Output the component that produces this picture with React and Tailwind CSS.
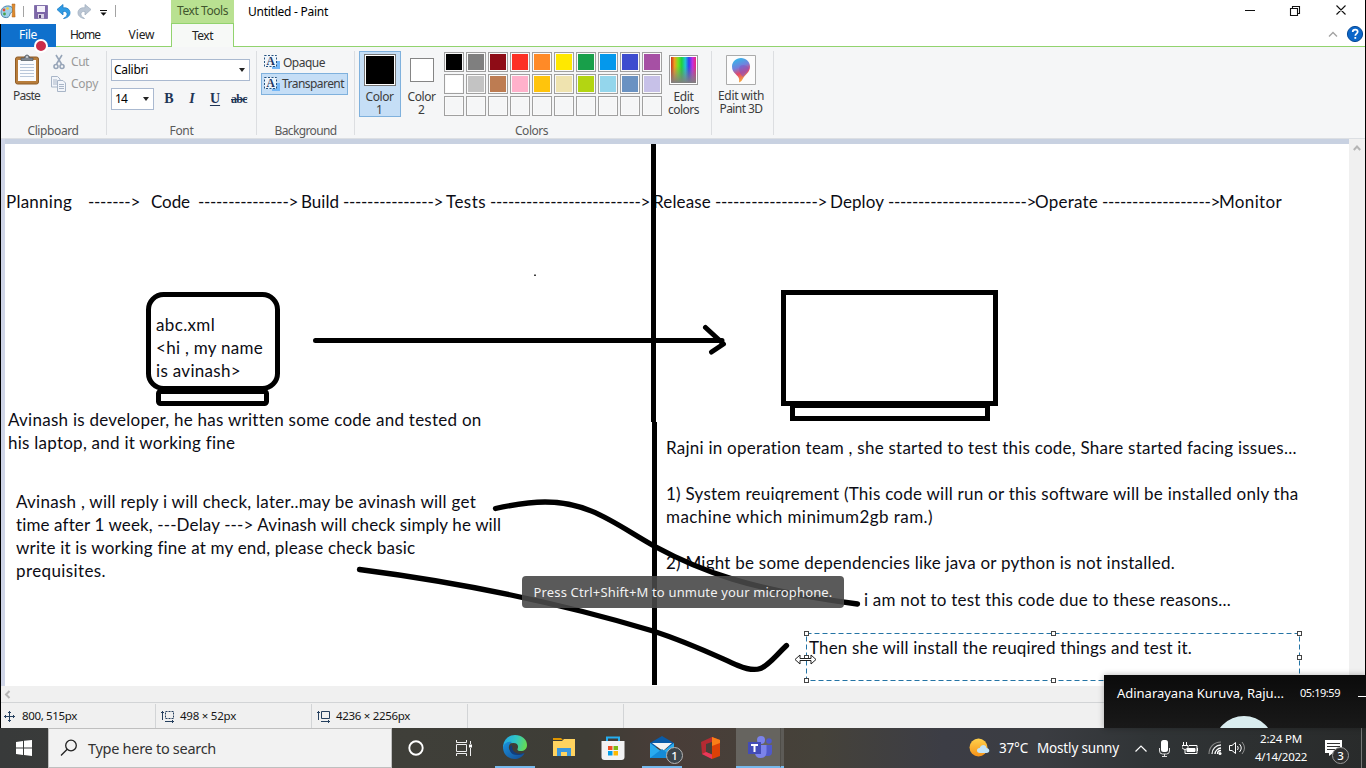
import React, { useLayoutEffect, useRef } from "react";

/* A single line of text, tracked so that it fills exactly `w` pixels. */
function Fit({ w, children, className = "" }) {
  const ref = useRef(null);
  useLayoutEffect(() => {
    const el = ref.current;
    el.style.letterSpacing = "0px";
    el.style.width = "auto";
    const natural = el.getBoundingClientRect().width;
    el.style.letterSpacing = (w - natural) / el.textContent.length + "px";
    el.style.width = w + "px";
  }, [w, children]);
  return (
    <span ref={ref} className={"inline-block shrink-0 whitespace-pre " + className}>
      {children}
    </span>
  );
}

const NOTES = [
  [6, 202, 66, "Planning"],
  [88, 202, 52, "------->"],
  [151, 202, 39, "Code"],
  [198, 202, 100, "--------------->"],
  [301, 202, 38, "Build"],
  [343, 202, 100, "--------------->"],
  [446, 202, 40, "Tests"],
  [490, 202, 160, "------------------------->"],
  [653, 202, 58, "Release"],
  [715, 202, 112, "----------------->"],
  [830, 202, 54, "Deploy"],
  [888, 202, 148, "----------------------->"],
  [1035, 202, 63, "Operate"],
  [1102, 202, 118, "------------------>"],
  [1219, 202, 63, "Monitor"],
  [156, 325, 59, "abc.xml"],
  [156, 348, 107, "<hi , my name"],
  [156, 371, 85, "is avinash>"],
  [8, 420, 473, "Avinash is developer, he has written some code and tested on"],
  [8, 443, 227, "his laptop, and it working fine"],
  [16, 502, 460, "Avinash , will reply i will check, later..may be avinash will get"],
  [16, 525, 485, "time after 1 week, ---Delay ---> Avinash will check simply he will"],
  [16, 548, 399, "write it is working fine at my end, please check basic"],
  [16, 571, 90, "prequisites."],
  [666, 448, 631, "Rajni in operation team , she started to test this code, Share started facing issues..."],
  [666, 494, 632, "1) System reuiqrement (This code will run or this software will be installed only tha"],
  [666, 517, 267, "machine which minimum2gb ram.)"],
  [666, 563, 509, "2) Might be some dependencies like java or python is not installed."],
  [864, 600, 367, "i am not to test this code due to these reasons..."],
  [809, 648, 383, "Then she will install the reuqired things and test it."],
];

const PALETTE = [
  "bg-black", "bg-[#7f7f7f]", "bg-[#8e0c16]", "bg-[#fc3025]", "bg-[#ff8a27]",
  "bg-[#ffe800]", "bg-[#189f4a]", "bg-[#0498ec]", "bg-[#3d4ccf]", "bg-[#a650a4]",
  "bg-white", "bg-[#c3c3c3]", "bg-[#bd7c52]", "bg-[#ffb1cb]", "bg-[#ffc40c]",
  "bg-[#efe3af]", "bg-[#b3d512]", "bg-[#94d6ec]", "bg-[#6a92c2]", "bg-[#c7c1e8]",
  "bg-[#f5f6f7]", "bg-[#f5f6f7]", "bg-[#f5f6f7]", "bg-[#f5f6f7]", "bg-[#f5f6f7]",
  "bg-[#f5f6f7]", "bg-[#f5f6f7]", "bg-[#f5f6f7]", "bg-[#f5f6f7]", "bg-[#f5f6f7]",
];

function TitleBar() {
  return (
    <div className="flex h-[47px] shrink-0 border-b border-[#92d36e] bg-white text-[12px] text-[#222]">
      <div className="flex w-[171px] shrink-0 flex-col">
        <div className="flex h-[24px] items-center">
          <svg width="170" height="24" viewBox="0 0 170 24">
            <path d="M1 12C1 8 5 5.500 9 6c3 .5 4 2 4 4 0 3-3 2-3 4 0 3-3 4-5 3.500C2 17 1 15 1 12z" fill="#9fd0ea" stroke="#4d87ad" />
            <circle cx="4" cy="10" r="1.400" fill="#e04b32" />
            <circle cx="7.500" cy="8.500" r="1.300" fill="#f4d03c" />
            <circle cx="4.500" cy="14" r="1.400" fill="#46a049" />
            <path d="M12 4h3l-.3 5 .4 8h-3l.4-8z" fill="#df8a2c" stroke="#a85f18" strokeWidth=".5" />
            <path d="M23.500 6v11M115.500 5v12" stroke="#a3a3a3" />
            <path d="M34.500 5.500h13v13h-13z" fill="#7d66a8" stroke="#8574ad" />
            <path d="M37 6h8v6h-8z" fill="#f4f1fa" />
            <path d="M38 14h6v4.500h-6z" fill="#d7d1e3" />
            <path d="M39 15h2v3h-2z" fill="#544577" />
            <path d="M57 9.500l6-5v3.300c4-.5 7 1.500 7 5 0 3-2.500 5.200-6.500 5.700 2.700-1.500 4-3 3.500-5-.4-1.700-2-2.300-4-2v3.500z" fill="#2f9be4" stroke="#1e7ec6" strokeWidth=".8" />
            <path d="M91 9.500l-6-5v3.300c-4-.5-7 1.500-7 5 0 3 2.500 5.200 6.500 5.700-2.700-1.500-4-3-3.500-5 .4-1.700 2-2.300 4-2v3.500z" fill="#bac5d3" stroke="#a3b1c2" strokeWidth=".8" />
            <path d="M100 10.500h7" stroke="#111" />
            <path d="M100.500 12.500h6l-3 3.300z" fill="#111" />
          </svg>
        </div>
        <div className="flex h-[22px] items-center">
          <div className="relative flex h-[23px] w-[56px] items-center justify-center bg-[#0f70cc] text-white">
            <Fit w={18}>File</Fit>
            <span className="absolute left-[34px] top-[15px] z-10 h-[14px] w-[14px] rounded-full border-2 border-white bg-[#ca2c49]" />
          </div>
          <div className="flex w-[58px] justify-center"><Fit w={30}>Home</Fit></div>
          <div className="flex w-[55px] justify-center"><Fit w={26}>View</Fit></div>
        </div>
      </div>
      <div className="flex h-[47px] w-[63px] shrink-0 flex-col">
        <div className="flex h-[23px] items-center justify-center bg-[#b9e191] pb-[2px] text-[#41562e]"><Fit w={51}>Text Tools</Fit></div>
        <div className="flex h-[24px] items-center justify-center border-x border-t border-[#92d36e] bg-[#f7f9f7]"><Fit w={21}>Text</Fit></div>
      </div>
      <div className="flex h-[24px] w-[981px] items-center pl-[14px] text-black"><Fit w={80}>Untitled - Paint</Fit></div>
      <svg className="shrink-0" width="150" height="46" viewBox="0 0 150 46">
        <path d="M30 10.500h10M75.500 8.500h7v7h-7zM77.500 8V6.500h7v7H83M121.500 5.500l9 9M130.500 5.500l-9 9" stroke="#111" fill="none" strokeWidth="1.100" />
        <path d="M114 36.500l4-4 4 4" stroke="#a2a2a2" fill="none" strokeWidth="1.300" />
        <circle cx="140" cy="34" r="7.600" fill="#0b66c8" stroke="#074a98" />
        <path d="M137.700 32c0-3.200 5-3 5-.2 0 1.900-2.400 1.800-2.400 4" stroke="#fff" strokeWidth="1.700" fill="none" />
        <path d="M139.400 37h1.800v1.800h-1.800z" fill="#fff" />
      </svg>
    </div>
  );
}

function RibbonGroup({ label, labelWidth, className, children }) {
  return (
    <div className={"flex h-[84px] shrink-0 flex-col border-r border-[#dcdee1] " + className}>
      <div className="flex h-[69px] shrink-0">{children}</div>
      <div className="flex justify-center pt-[2px] leading-[15px] text-[#5a5a5a]">
        {label && <Fit w={labelWidth} className="pt-px">{label}</Fit>}
      </div>
    </div>
  );
}

function LetterBox() {
  return (
    <svg className="shrink-0" width="17" height="16" viewBox="0 0 17 16">
      <path d="M8 7h8v8H8z" fill="#74b7f7" />
      <path d="M.5 1.500h12v11H.5z" fill="#eef5fc" stroke="#27537f" strokeDasharray="2 1.500" />
      <text x="2.500" y="11" fontFamily="Liberation Serif, serif" fontWeight="700" fontSize="11.500" fill="#1f3864">A</text>
    </svg>
  );
}

function Ribbon() {
  return (
    <div className="flex h-[92px] shrink-0 border-b border-[#dcdfe3] bg-[#f5f6f7] pt-1 text-[12px] text-[#3c3c3c]">
      <RibbonGroup label="Clipboard" labelWidth={51} className="w-[107px]">
        <div className="flex w-[52px] flex-col items-center pl-px pt-[3px]">
          <svg width="26" height="31" viewBox="0 0 26 31">
            <rect x="1.500" y="3" width="23" height="27" rx="2" fill="#b77d3b" stroke="#8f5d27" />
            <path d="M4 6h18v21H4z" fill="#fbfcfe" />
            <path d="M6 10.500h14M6 13.500h14M6 16.500h14M6 19.500h14M6 22.500h14" stroke="#b9c7da" />
            <path d="M7 6.500V4h3.500c0-4 5-4 5 0H19v2.500z" fill="#7e8791" stroke="#4e565f" strokeWidth=".7" />
            <path d="M12 3h2" stroke="#fff" />
          </svg>
          <Fit w={27} className="mt-[3px] leading-[16px]">Paste</Fit>
        </div>
        <div className="flex flex-col pt-[3px] text-[#9a9a9a]">
          <div className="flex h-[16px] items-center">
            <svg width="19" height="16" viewBox="0 0 19 16" fill="none" stroke="#97a5b8" strokeWidth="1.600">
              <path d="M4 1l5.500 9M10 1L4.500 10" />
              <circle cx="4" cy="12.500" r="2" /><circle cx="10" cy="12.500" r="2" />
            </svg>
            <Fit w={18}>Cut</Fit>
          </div>
          <div className="mt-[6px] flex h-[16px] items-center">
            <svg className="-ml-[1px]" width="20" height="16" viewBox="0 0 20 16" fill="#f2f5fa" stroke="#a8b5c7">
              <path d="M.5.500h6l2.500 2.500v8H.5z" /><path d="M2 4h4M2 6h4M2 8h4" />
              <path d="M6.500 4.500h5.500l2.500 2.500v8.500h-8z" /><path d="M8 8.500h5M8 10.500h5M8 12.500h5" />
            </svg>
            <Fit w={27}>Copy</Fit>
          </div>
        </div>
      </RibbonGroup>

      <RibbonGroup label="Font" labelWidth={24} className="w-[150px]">
        <div className="flex flex-col pl-1 pt-2">
          <div className="flex h-[22px] w-[139px] items-center justify-between border border-[#aab9d0] bg-white pl-[2px] pr-[4px] text-black">
            <Fit w={34}>Calibri</Fit>
            <svg width="6" height="4"><path d="M0 0h6L3 4z" fill="#222" /></svg>
          </div>
          <div className="mt-[7px] flex items-center">
            <div className="flex h-[22px] w-[43px] items-center justify-between border border-[#aab9d0] bg-white pl-[3px] pr-[4px] text-black">
              <Fit w={12}>14</Fit>
              <svg width="6" height="4"><path d="M0 0h6L3 4z" fill="#222" /></svg>
            </div>
            <div className="flex items-center font-['Liberation_Serif',serif] text-[14px] font-bold leading-[20px] text-[#1f3556]">
              <span className="w-[30px] text-center">B</span>
              <span className="w-[16px] text-center italic">I</span>
              <span className="w-[30px] text-center underline underline-offset-2">U</span>
              <span className="w-[18px] text-center text-[12px]"><Fit w={16} className="line-through">abc</Fit></span>
            </div>
          </div>
        </div>
      </RibbonGroup>

      <RibbonGroup label="Background" labelWidth={62} className="w-[98px]">
        <div className="flex flex-col pl-1">
          <div className="flex h-[22px] items-center gap-[2px] pl-[3px]"><LetterBox /><Fit w={42} className="pt-px">Opaque</Fit></div>
          <div className="flex h-[22px] w-[87px] items-center gap-[1px] border border-[#7fb1dd] bg-[#c5def6] pl-[2px]"><LetterBox /><Fit w={62}>Transparent</Fit></div>
        </div>
      </RibbonGroup>

      <RibbonGroup label="Colors" labelWidth={33} className="w-[357px] pr-[3px]">
        <div className="ml-1 flex h-[66px] w-[42px] shrink-0 flex-col items-center border border-[#7fb1dd] bg-[#c5def6] pr-px pt-[2px] leading-[13px]">
          <div className="h-[32px] w-[32px] border border-[#777] bg-white p-px"><div className="h-full bg-black" /></div>
          <Fit w={28} className="mt-1">Color</Fit><span>1</span>
        </div>
        <div className="mr-[2px] flex w-[41px] shrink-0 flex-col items-center pt-[7px] leading-[13px]">
          <div className="ml-px h-[24px] w-[24px] border border-[#858585] bg-white" />
          <Fit w={28} className="mt-2">Color</Fit><span>2</span>
        </div>
        <div className="mt-px grid h-[64px] shrink-0 grid-cols-10 gap-[2px]">
          {PALETTE.map((c, i) => (
            <div key={i} className="h-[20px] w-[20px] border border-[#a0a0a0] bg-[#fafafa] p-px"><div className={"h-full " + c} /></div>
          ))}
        </div>
        <div className="flex w-[43px] shrink-0 flex-col items-center pt-[4px] leading-[13px]">
          <div className="h-[30px] w-[29px] border border-[#9a9a9a] bg-white p-px">
            <div className="h-full bg-[linear-gradient(to_right,#c83020,#f0a020,#78e020,#20d040,#20c8d0,#3040f0,#c030e0,#e82878)]">
              <div className="h-full bg-[linear-gradient(to_bottom,transparent_35%,#808080)]" />
            </div>
          </div>
          <Fit w={20} className="mt-[5px]">Edit</Fit><Fit w={31}>colors</Fit>
        </div>
      </RibbonGroup>

      <RibbonGroup className="w-[62px]">
        <div className="flex w-[58px] flex-col items-center pt-[4px] leading-[13px]">
          <svg width="30" height="30" viewBox="0 0 30 30">
            <defs>
              <linearGradient id="pin" x1="0" y1="0" x2=".3" y2="1">
                <stop offset="0" stopColor="#25c5ee" /><stop offset=".45" stopColor="#7480dc" /><stop offset=".7" stopColor="#e3476b" /><stop offset="1" stopColor="#f6a43a" />
              </linearGradient>
            </defs>
            <path d="M.5.500h29v29H.5z" fill="#fcfcfc" stroke="#ababab" />
            <path d="M15 3c5 0 9 4 9 8.500 0 6-5 8-7 12-1 2-2 3-4 4 .8-4-.5-5.500-3-8-2.500-2.500-4-4.500-4-8C6 7 10 3 15 3z" fill="url(#pin)" />
            <path d="M14 11c3-2 6-1 9 2-1 4-4 6-6 9-3-3-5-7-3-11z" fill="#7b58c9" opacity=".55" />
          </svg>
          <Fit w={46} className="mt-[4px]">Edit with</Fit><Fit w={43}>Paint 3D</Fit>
        </div>
      </RibbonGroup>
    </div>
  );
}

function Handle({ className }) {
  return <span className={"absolute h-[5px] w-[5px] border border-[#444] bg-white " + className} />;
}

function Canvas() {
  return (
    <div className="relative flex h-[547px] shrink-0 overflow-hidden">
      <div className="h-full w-[5px] shrink-0 bg-[#cfd5e7]" />
      <div className="h-full w-[1344px] shrink-0 border-t-[5px] border-[#c8d1e1] bg-white" />
      <div className="flex h-full flex-1 justify-center bg-[#f0f0f0] pt-[6px]">
        <svg width="8" height="6"><path d="M.8 5L4 1.500 7.200 5" fill="none" stroke="#b5b5b5" strokeWidth="2" /></svg>
      </div>
      <div className="absolute left-0 top-0 font-[Lato,Carlito,sans-serif] text-[17px] leading-[24px] text-[#0c0c14]">
        {NOTES.map(([x, y, w, text], i) => (
          <div key={i} className="absolute" style={{ left: x, top: y - 139 - 12 }}>
            <Fit w={w}>{text}</Fit>
          </div>
        ))}
      </div>
      <svg className="absolute left-0 top-0" width="1366" height="547" viewBox="0 139 1366 547" fill="none" stroke="#000" strokeWidth="5">
        <path d="M653.500 144v278M654.500 422v263" />
        <rect x="148.500" y="294.500" width="129" height="94" rx="15" />
        <rect x="158.500" y="391.500" width="108" height="12" rx="2" />
        <path d="M315.500 340.500H722M705.500 327.500L723.500 344l-12 8" strokeLinecap="round" strokeLinejoin="round" />
        <rect x="783.500" y="292.500" width="212" height="111" />
        <rect x="792.500" y="405.500" width="195" height="13" />
        <path d="M495.500 508.500C512 505 528 502 545 502C590 502 615 524 654 546C700 571 750 590 857.500 604" strokeLinecap="round" strokeWidth="5.300" />
        <path d="M359.500 569.500C456 582 560 603 653 631C690 643 714 655 738 665.500C763 676 766 665 786.500 645.500" strokeLinecap="round" strokeWidth="5.300" />
        <path d="M535 274.500v1.500" strokeWidth="1.500" />
        <rect x="806.500" y="633.500" width="493" height="47" stroke="#2474a5" strokeWidth="1" strokeDasharray="5 3" />
      </svg>
      <Handle className="left-[804px] top-[492px]" />
      <Handle className="left-[1051px] top-[492px]" />
      <Handle className="left-[1297px] top-[492px]" />
      <Handle className="left-[804px] top-[516px]" />
      <Handle className="left-[1297px] top-[516px]" />
      <Handle className="left-[804px] top-[539px]" />
      <Handle className="left-[1051px] top-[539px]" />
      <svg className="absolute left-[794px] top-[515px]" width="24" height="11" viewBox="0 0 24 11">
        <path d="M1 5.500L6 1v3.500h11V1l5 4.500L17 10V6.500H6V10z" fill="#fff" stroke="#222" />
      </svg>
      <div className="absolute left-[522px] top-[437px] flex h-[32px] w-[322px] items-center justify-center rounded bg-[#484848]/90 pt-px text-[13px] text-[#f2f2f2]">
        <Fit w={299}>Press Ctrl+Shift+M to unmute your microphone.</Fit>
      </div>
    </div>
  );
}

function StatusBar() {
  return (
    <div className="flex h-[42px] shrink-0 flex-col bg-[#f0f0f0] text-[11.500px] text-[#151515]">
      <div className="flex h-[17px] items-center border-b border-[#d2d4d6] pl-[4px]">
        <svg width="7" height="9"><path d="M5.500 1L2 4.500 5.500 8" fill="none" stroke="#b5b5b5" strokeWidth="2" /></svg>
      </div>
      <div className="flex flex-1 pt-px">
        <div className="flex w-[156px] items-center border-r border-[#d2d4d6] pl-[4px]">
          <svg width="11" height="11" viewBox="0 0 11 11" fill="none" stroke="#26405f"><path d="M5.500 0v11M0 5.500h11M4 2l1.500-1.500L7 2M4 9l1.500 1.500L7 9M2 4L.5 5.500 2 7M9 4l1.500 1.500L9 7" /></svg>
          <Fit w={55} className="ml-[7px]">800, 515px</Fit>
        </div>
        <div className="flex w-[156px] items-center border-r border-[#d2d4d6] pl-[5px]">
          <svg width="14" height="13" viewBox="0 0 14 13" fill="none" stroke="#26405f"><path d="M1.500 1v9M0 3l1.500-1.500L3 3M4 11.500h9M11 10l1.500 1.500L11 13" /><path d="M4.500 1.500h8v7h-8z" strokeDasharray="2 1" /></svg>
          <Fit w={56} className="ml-[5px]">498 × 52px</Fit>
        </div>
        <div className="flex w-[156px] items-center border-r border-[#d2d4d6] pl-[5px]">
          <svg width="14" height="13" viewBox="0 0 14 13" fill="none" stroke="#26405f"><path d="M1.500 1v9M0 3l1.500-1.500L3 3M4 11.500h9M11 10l1.500 1.500L11 13M4.500 1.500h8v7h-8z" /></svg>
          <Fit w={74} className="ml-[5px]">4236 × 2256px</Fit>
        </div>
        <div className="w-[156px] border-r border-[#d2d4d6]" />
      </div>
    </div>
  );
}

function TaskIcon({ className = "", children }) {
  return <div className={"flex h-[40px] shrink-0 items-center justify-center " + className}>{children}</div>;
}

function Taskbar() {
  return (
    <div className="flex h-[40px] shrink-0 bg-[linear-gradient(to_right,#383a3a_0%,#3f3f39_30%,#3e3d36_43%,#493d38_49%,#45423a_60%,#3c3d45_69%,#3b3d42_76%,#303436_84%,#292b2b_100%)] text-white">
      <TaskIcon className="w-[48px]">
        <svg width="16" height="16" viewBox="0 0 16 16" fill="#fff"><path d="M0 2l7-1v6.500H0zM8 .8L16 0v7.500H8zM0 8.500h7V15l-7-1zM8 8.500h8V16l-8-.9z" /></svg>
      </TaskIcon>
      <div className="flex w-[344px] items-center border border-[#bfbfbf] bg-[#f2f2f2] pl-[11px] text-[14.500px] text-[#333]">
        <svg width="18" height="18" viewBox="0 0 18 18" fill="none" stroke="#222" strokeWidth="1.300"><circle cx="11" cy="6.500" r="5.300" /><path d="M7.200 10.300L1 16.500" /></svg>
        <Fit w={128} className="ml-[10px] pt-px">Type here to search</Fit>
      </div>
      <TaskIcon className="w-[48px]">
        <svg width="16" height="16"><circle cx="8" cy="8" r="6.700" fill="none" stroke="#fff" strokeWidth="1.900" /></svg>
      </TaskIcon>
      <TaskIcon className="w-[48px]">
        <svg width="16" height="16" viewBox="0 0 16 16" fill="none" stroke="#eee"><path d="M.5 0v2.500h10V0M.5 4.500h10v7H.5zM.5 16v-2.500h10V16M14.500 1v3M14.500 8v8" /><path d="M13 4.500h3v3h-3z" fill="#fff" stroke="none" /></svg>
      </TaskIcon>
      <TaskIcon className="ml-[7px] w-[40px] border-b-2 border-[#76b9ed]">
        <svg width="24" height="24" viewBox="0 0 24 24">
          <defs>
            <linearGradient id="edgeTop" x1="0" y1=".4" x2="1" y2=".6"><stop offset="0" stopColor="#23a8e5" /><stop offset=".5" stopColor="#31c6c4" /><stop offset="1" stopColor="#68dd4d" /></linearGradient>
            <linearGradient id="edgeLow" x1="0" y1="0" x2="1" y2="1"><stop offset="0" stopColor="#1b92dc" /><stop offset="1" stopColor="#134a93" /></linearGradient>
          </defs>
          <path d="M0 11C1 4 6 0 12 0c7 0 12 4.500 12 10 0 4-3 6-6 6-2.500 0-4-1-3.500-2 1.500-3 0-6-4-6C6 8 2 10 .5 14z" fill="url(#edgeTop)" />
          <path d="M0 12c1-4 5-6 9-5-3 2-4 5-2.500 8 2 4 8 5.500 15 3-2 4-6 6-10 6C5 24 0 19 0 12z" fill="url(#edgeLow)" />
          <path d="M8 10c-3 5 0 11 8 10 2 0 4-1 5.500-2-6 2-11 0-12-4-.3-2 0-3-1.500-4z" fill="#123d7c" />
        </svg>
      </TaskIcon>
      <TaskIcon className="ml-[9px] w-[40px] pb-[2px]">
        <svg width="22" height="18" viewBox="0 0 22 18"><path d="M0 0h8l2 2H0z" fill="#df9600" /><path d="M0 3h9l2-2h11v17H0z" fill="#ffd35f" /><path d="M4 18v-8h14v8h-4v-4H8v4z" fill="#3b97dd" /></svg>
      </TaskIcon>
      <TaskIcon className="ml-[9px] w-[40px]">
        <svg width="24" height="24" viewBox="0 0 24 24"><path d="M6 6V1.500h12V6" fill="none" stroke="#25aef0" strokeWidth="2" /><path d="M.5 5h23v16q0 3-3 3h-17q-3 0-3-3z" fill="#f3f3f3" /><path d="M7 10h4.500v4H7z" fill="#f04e24" /><path d="M12.500 10H17v4h-4.500z" fill="#7dba12" /><path d="M7 15h4.500v4.500H7z" fill="#049fe9" /><path d="M12.500 15H17v4.500h-4.500z" fill="#ffb900" /></svg>
      </TaskIcon>
      <TaskIcon className="relative ml-[9px] w-[40px] border-b-2 border-[#76b9ed]">
        <svg width="24" height="22" viewBox="0 0 24 22"><path d="M0 7l12-7 12 7v4H0z" fill="#0a5ba7" /><path d="M2 7h20l-9 8z" fill="#f4f4f4" /><path d="M0 7l12 9 12-9v15H0z" fill="#29abee" /><path d="M0 22l12-9 12 9z" fill="#148bd7" /></svg>
        <span className="absolute left-[24px] top-[19px] flex h-[17px] w-[17px] items-center justify-center rounded-full border border-[#b5b5b5] bg-[#3d464c] text-[11.500px] font-medium">1</span>
      </TaskIcon>
      <TaskIcon className="ml-[8px] w-[40px]">
        <svg width="19" height="22" viewBox="0 0 19 22"><path d="M0 5l11-5v5L5 7v8l6 2.500V22L1 17z" fill="#b42a32" /><path d="M11 0l8 3v16l-8 3z" fill="#dc4107" /><path d="M11 0l8 3v3l-8 3z" fill="#f97e18" /><path d="M1 17l4-2 6 2.500V22z" fill="#e9395a" /></svg>
      </TaskIcon>
      <TaskIcon className="ml-[6px] w-[44px] border-b-2 border-[#76b9ed] bg-[#66645f]">
        <svg className="ml-[4px]" width="24" height="23" viewBox="0 0 24 23"><circle cx="13" cy="4" r="4" fill="#7b83eb" /><circle cx="21" cy="5" r="2.800" fill="#5059c9" /><path d="M17 9h7v7q0 4-4 4h-3z" fill="#5059c9" /><path d="M7 9h11.500v7q0 6-6 6-5.500 0-5.500-6z" fill="#7b83eb" /><path d="M0 6h13v12H0z" fill="#434cb7" /><path d="M3 9h7M6.500 9v7" stroke="#fff" strokeWidth="2" /></svg>
      </TaskIcon>
      <div className="w-[4px] border-b-2 border-l border-[#4f4d48] border-b-[#76b9ed] bg-[#5d5b57]" />
      <div className="flex flex-1 items-center justify-end">
        <svg width="21" height="20" viewBox="0 0 21 20"><defs><linearGradient id="sun" x1="0" y1="0" x2="0" y2="1"><stop offset="0" stopColor="#ffd14b" /><stop offset="1" stopColor="#f59219" /></linearGradient></defs><circle cx="9.500" cy="9.500" r="9" fill="url(#sun)" /><path d="M11 15c-4 0-4-5-.3-5C12 6 17 6 17.500 10c4 .5 3.500 5 0 5z" fill="#c3e4f8" /></svg>
        <Fit w={29} className="ml-[9px] pt-px text-[13.500px]">37°C</Fit>
        <Fit w={82} className="ml-[9px] pt-px text-[13.500px]">Mostly sunny</Fit>
        <svg className="ml-[16px]" width="12" height="7"><path d="M.5 6.500L6 1l5.500 5.500" fill="none" stroke="#fff" strokeWidth="1.200" /></svg>
        <svg className="ml-[12px]" width="11" height="17" viewBox="0 0 11 17"><rect x="2" y="0" width="7" height="12" rx="2.500" fill="#fff" /><path d="M.5 8v3q0 3 3 3h4q3 0 3-3V8M5.500 14v2M3 16.500h5" fill="none" stroke="#ddd" /></svg>
        <svg className="ml-[12px]" width="16" height="13" viewBox="0 0 16 13" fill="none" stroke="#fff"><path d="M1.500 0v3M4.500 0v3M0 3.500h6v2q-1 2-3 2t-3-2zM3 8v3.500h12v-8H7M15.500 6v3" /><path d="M5 6.500h8v3H5z" fill="#fff" /></svg>
        <svg className="ml-[10px]" width="14" height="14" viewBox="0 0 14 14" fill="none"><path d="M1 13C1 6 6 1 13 1" stroke="#888" strokeWidth="1.200" /><path d="M4 13c0-5 4-9 9-9" stroke="#eee" strokeWidth="1.300" /><path d="M7 13c0-3 3-6 6-6M9.500 13c0-2 1.500-3.500 3.500-3.500" stroke="#fff" strokeWidth="1.300" /><circle cx="12" cy="12.500" r="1.500" fill="#fff" /></svg>
        <svg className="ml-[7px]" width="17" height="14" viewBox="0 0 17 14" fill="none" stroke="#fff"><path d="M.5 4.500H3L6.500 1.500v11L3 9.500H.5zM8.500 5q1.500 2 0 4M10.500 3q3.500 4 0 8" /><path d="M13 1q5 6 0 12" stroke="#909090" /></svg>
        <div className="ml-[9px] flex w-[52px] flex-col items-center text-[11.500px] leading-[18px]"><Fit w={42}>2:24 PM</Fit><Fit w={52}>4/14/2022</Fit></div>
        <div className="relative ml-[18px] mr-[19px] h-[16px] w-[17px]">
          <svg width="17" height="16" viewBox="0 0 17 16"><path d="M0 0h17v13H8l-4 3v-3H0z" fill="#fff" /><path d="M2 3.500h13M2 6.500h13M2 9.500h8" stroke="#333" /></svg>
          <span className="absolute left-[7px] top-[7px] flex h-[17px] w-[17px] items-center justify-center rounded-full border border-[#999] bg-[#303030] text-[11.500px] font-medium">3</span>
        </div>
        <div className="mr-[4px] h-full w-px bg-[#777]" />
      </div>
    </div>
  );
}

export default function App() {
  return (
    <div className="relative flex h-[768px] w-[1366px] flex-col overflow-hidden bg-white font-['Noto_Sans','Open_Sans',sans-serif]">
      <div className="flex h-[728px] flex-col border-r border-black">
        <TitleBar />
        <Ribbon />
        <Canvas />
        <StatusBar />
      </div>
      <Taskbar />
      <div className="absolute left-0 top-[24px] h-[704px] w-px bg-black" />
      <div className="absolute left-[1104px] top-[675px] h-[53px] w-[262px] overflow-hidden bg-[linear-gradient(to_bottom,#0b0b0b,#191919)] text-white shadow-[0_0_6px_rgba(0,0,0,0.3)]">
        <div className="flex h-[36px] items-center pl-[13px]">
          <Fit w={167} className="pt-px text-[13px]">Adinarayana Kuruva, Raju...</Fit>
          <Fit w={40} className="ml-[16px] pt-px text-[11px]">05:19:59</Fit>
          <div className="ml-[18px] mt-[6px] h-px flex-1 bg-white" />
        </div>
        <div className="ml-[110px] mt-[5px] h-[60px] w-[60px] rounded-full bg-[#d9ecef]" />
      </div>
    </div>
  );
}
